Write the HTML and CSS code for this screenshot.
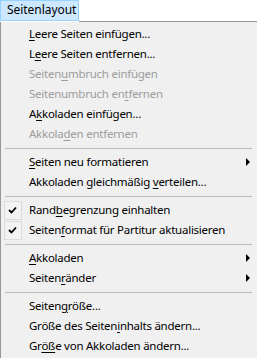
FILE: index.html
```html
<!DOCTYPE html>
<html lang="de">
<head>
<meta charset="utf-8">
<title>Seitenlayout</title>
<link rel="stylesheet" href="styles.css">
</head>
<body>
<div class="menubar">
  <div class="title">Seitenlayout</div>
  <div class="bar-fill"></div>
</div>
<div class="menu">
  <div class="item"><span class="icon"></span><span class="label"><u>L</u>eere Seiten einfügen...</span></div>
  <div class="item"><span class="icon"></span><span class="label">L<u>e</u>ere Seiten entfernen...</span></div>
  <div class="item disabled"><span class="icon"></span><span class="label">Seiten<u>u</u>mbruch einfügen</span></div>
  <div class="item disabled"><span class="icon"></span><span class="label">Seitenumbruch en<u>t</u>fernen</span></div>
  <div class="item"><span class="icon"></span><span class="label">A<u>k</u>koladen einfügen...</span></div>
  <div class="item disabled"><span class="icon"></span><span class="label">Akkola<u>d</u>en entfernen</span></div>
  <div class="sep"></div>
  <div class="item"><span class="icon"></span><span class="label"><u>S</u>eiten neu formatieren</span><span class="arrow"></span></div>
  <div class="item"><span class="icon"></span><span class="label">Akkoladen gleichmäßig <u>v</u>erteilen...</span></div>
  <div class="sep"></div>
  <div class="item"><span class="icon"><span class="check"><svg width="9" height="8" viewBox="0 0 9 8"><path d="M1 4 L3.5 6.5 L8 1.5" fill="none" stroke="#000" stroke-width="1.8"/></svg></span></span><span class="label">Rand<u>b</u>egrenzung einhalten</span></div>
  <div class="item"><span class="icon"><span class="check"><svg width="9" height="8" viewBox="0 0 9 8"><path d="M1 4 L3.5 6.5 L8 1.5" fill="none" stroke="#000" stroke-width="1.8"/></svg></span></span><span class="label">Seiten<u>f</u>ormat für Partitur aktualisieren</span></div>
  <div class="sep"></div>
  <div class="item"><span class="icon"></span><span class="label"><u>A</u>kkoladen</span><span class="arrow"></span></div>
  <div class="item"><span class="icon"></span><span class="label">Seiten<u>r</u>änder</span><span class="arrow"></span></div>
  <div class="sep"></div>
  <div class="item"><span class="icon"></span><span class="label">Seiten<u>g</u>röße...</span></div>
  <div class="item"><span class="icon"></span><span class="label">Größe des Seiten<u>i</u>nhalts ändern...</span></div>
  <div class="item"><span class="icon"></span><span class="label">Gr<u>öß</u>e von Akkoladen ändern...</span></div>
</div>
</body>
</html>
```
FILE: styles.css
```css
html, body {
  margin: 0;
  padding: 0;
  background: #ffffff;
  overflow: hidden;
  width: 257px;
  height: 358px;
}
body {
  font-family: "Noto Sans", "Open Sans", sans-serif;
  font-size: 11.5px;
  letter-spacing: -0.25px;
  color: #000;
}
.menubar {
  display: flex;
  height: 22px;
}
.title {
  box-sizing: border-box;
  width: 79px;
  height: 21px;
  background: #cce8ff;
  border: 1px solid #99d1ff;
  padding-left: 6px;
  font-size: 12px;
  letter-spacing: -0.05px;
  line-height: 18px;
}
.bar-fill {
  flex: 1;
  height: 21px;
  border-bottom: 1px solid #979797;
}
.menu {
  box-sizing: border-box;
  width: 262px;
  background: #f0f0f0;
  border-left: 1px solid #979797;
  padding: 2px 0 2px 0;
}
.item {
  display: flex;
  align-items: center;
  height: 20px;
}
.icon {
  width: 28px;
  height: 20px;
  display: flex;
  align-items: center;
  flex: none;
}
.label {
  flex: 1;
  white-space: nowrap;
  line-height: 20px;
}
.label u {
  text-underline-offset: 2px;
}
.disabled { color: #9d9d9d; }
.arrow {
  width: 0;
  height: 0;
  border-top: 4px solid transparent;
  border-bottom: 4px solid transparent;
  border-left: 4px solid #000;
  margin-right: 12px;
}
.check {
  box-sizing: border-box;
  margin-left: 3px;
  width: 18px;
  height: 19px;
  border: 1px solid #dcdcdc;
  background: #f3f3f3;
  display: flex;
  align-items: center;
  justify-content: center;
}
.check svg { display: block; margin-left: -1px; }
.sep {
  height: 8px;
  display: flex;
  align-items: center;
  padding-left: 4px;
  padding-right: 10px;
}
.sep::before {
  content: "";
  flex: 1;
  height: 1px;
  background: #bdbdbd;
}
```
